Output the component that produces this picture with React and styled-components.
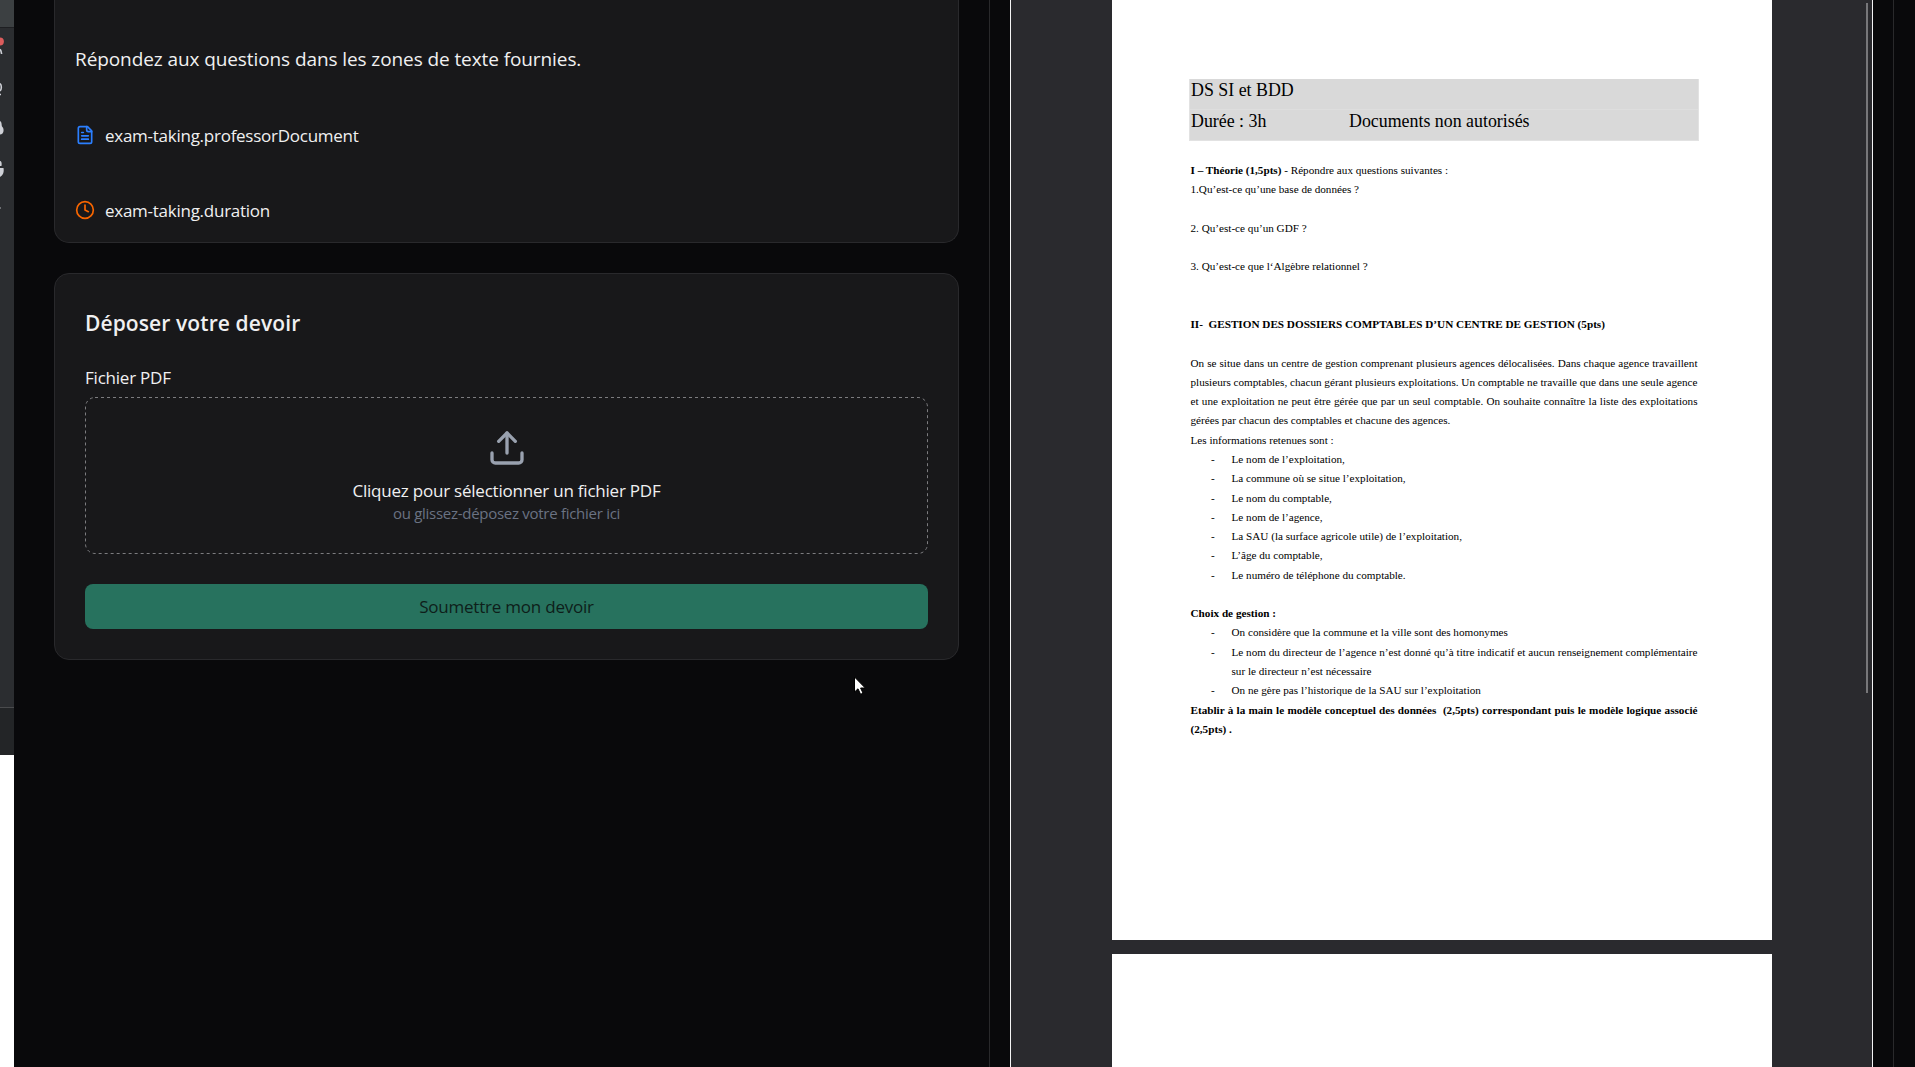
import React from "react";
import styled, { createGlobalStyle } from "styled-components";
import { Upload } from "lucide-react";

const GlobalStyle = createGlobalStyle`
  * { box-sizing: border-box; }
  body { margin: 0; background: #09090b; overflow: hidden; }
`;

const Screen = styled.div`
  position: relative;
  display: flex;
  width: 100vw;
  height: 100vh;
  overflow: hidden;
  background: #09090b;
  color: #f0f0f1;
  font-family: "Open Sans", "Noto Sans", sans-serif;
`;

/* Neighbouring editor window, visible along the left edge */
const EditorEdge = styled.aside`
  display: flex;
  flex-direction: column;
  flex: 0 0 14px;
  background: #fff;
`;
const EditorTitle = styled.div`
  height: 28px;
  background: #3c4042;
  border-bottom: 1px solid #1e1f22;
`;
const EditorTools = styled.div`
  height: 679px;
  background: #2b2d30;
`;
const EditorFooter = styled.div`
  height: 48px;
  background: #232527;
  border-top: 1px solid #4a4b4d;
`;

const Workspace = styled.main`
  display: flex;
  flex-direction: column;
  gap: 30px;
  flex: 0 0 976px;
  padding: 0 30px 0 40px;
  border-right: 1px solid #29292b;
`;

const Card = styled.section`
  border: 1px solid #29292c;
  border-radius: 15px;
  background: #18181a;
`;
const InstructionsCard = styled(Card)`
  display: flex;
  flex-direction: column;
  height: 243px;
  padding: 44px 20px 0;
  border-top: 0;
  border-top-left-radius: 0;
  border-top-right-radius: 0;
`;
const Instructions = styled.p`
  flex: none;
  margin: 0 0 46px;
  font-size: 19px;
  line-height: 30px;
  letter-spacing: -0.09px;
`;
const InfoRow = styled.div`
  display: flex;
  flex: none;
  align-items: center;
  gap: 10px;
  height: 30px;
  font-size: 17px;
  letter-spacing: -0.26px;

  & + & {
    margin-top: 45px;
  }
`;

const UploadCard = styled(Card)`
  display: flex;
  flex-direction: column;
  padding: 30px;
`;
const Heading = styled.h2`
  margin: 0 0 24px;
  font-size: 21px;
  font-weight: 600;
  line-height: 38px;
  letter-spacing: 0.1px;
`;
const Label = styled.label`
  margin-bottom: 7px;
  font-size: 17px;
  line-height: 24px;
  letter-spacing: -0.22px;
`;
const DropZone = styled.div`
  position: relative;
  display: flex;
  flex-direction: column;
  align-items: center;
  height: 157px;
  padding-top: 31px;
`;
const DashedOutline = styled.svg`
  position: absolute;
  inset: 0;
  width: 100%;
  height: 100%;
`;
const DropTitle = styled.div`
  margin-top: 11px;
  font-size: 17px;
  line-height: 24px;
  letter-spacing: -0.22px;
`;
const DropHint = styled.div`
  font-size: 15px;
  line-height: 20px;
  letter-spacing: -0.28px;
  color: #6a7282;
`;
const Submit = styled.button`
  height: 45px;
  margin-top: 30px;
  padding: 0;
  border: 0;
  border-radius: 8px;
  background: #27725e;
  color: #0e1e1a;
  font: 400 17px "Open Sans", "Noto Sans", sans-serif;
  letter-spacing: -0.22px;
`;

const ViewerPane = styled.section`
  flex: 1;
  display: flex;
  padding: 0 20px;
`;
const Viewer = styled.div`
  position: relative;
  flex: 1;
  display: flex;
  flex-direction: column;
  gap: 14px;
  padding-left: 101px;
  border: solid #f4f4f5;
  border-width: 0 1px;
  background: #2a2a2e;
`;
const ViewerColumn = styled.div`
  flex: 0 0 22px;
  border-left: 1px solid #29292b;
`;
const Thumb = styled.div`
  position: absolute;
  top: 3px;
  right: 4px;
  width: 2px;
  height: 690px;
  background: #77777a;
`;

const Page = styled.article`
  flex: 0 0 auto;
  width: 660px;
  height: ${(p) => p.$height}px;
  padding: 79px 73px 0 77px;
  background: #fff;
  color: #000;
  font-family: "Liberation Serif", "Times New Roman", serif;
`;
const TitleTable = styled.header`
  height: 62px;
  border: 1px solid #e2e2e2;
  border-top: 0;
  background: #d9d9d9;
  font-size: 17.87px;
  line-height: 23px;
`;
const TitleRow = styled.div`
  display: grid;
  grid-template-columns: 158px 1fr;
  height: 31px;
  padding-left: 1px;
  white-space: nowrap;

  & + & {
    border-top: 1px solid #dedede;
    height: 30px;
    margin-top: -1px;
  }
`;
const Body = styled.div`
  padding: 20px 1.5px 0;
  font-size: 11.17px;
  line-height: 19.28px;
`;
const TextLine = styled.div`
  height: 19.28px;
  white-space: nowrap;
  ${(p) => p.$bold && "font-weight: 700; font-size: 11.2px;"}
  ${(p) => p.$justify && "white-space: normal; text-align: justify; text-align-last: justify;"}
`;
const Item = styled.div`
  display: grid;
  grid-template-columns: 20.5px 1fr;
  padding-left: 20.5px;
`;

const Pointer = styled.svg`
  position: absolute;
  left: 853px;
  top: 676px;
`;

const FileIcon = () => (
  <svg width="20" height="20" viewBox="0 0 24 24" fill="none" stroke="#2b7fff" strokeWidth="2" strokeLinecap="round" strokeLinejoin="round">
    <path d="M15 2H6a2 2 0 0 0-2 2v16a2 2 0 0 0 2 2h12a2 2 0 0 0 2-2V7Z" />
    <path d="M14 2v4a2 2 0 0 0 2 2h4" />
    <path d="M10 9H8M16 13H8M16 17H8" />
  </svg>
);
const ClockIcon = () => (
  <svg width="20" height="20" viewBox="0 0 24 24" fill="none" stroke="#f86600" strokeWidth="2" strokeLinecap="round" strokeLinejoin="round">
    <circle cx="12" cy="12" r="10" />
    <path d="M12 6v6l4 2" />
  </svg>
);
const ToolGlyphs = () => (
  <svg width="14" height="200" viewBox="0 28 14 200" fill="none" stroke="#ced0d6" strokeWidth="1.6">
    <circle cx="0" cy="41.5" r="3.9" fill="#db5c5c" stroke="none" />
    <path d="M0 49.5Q1 50 1.6 54" />
    <path d="M0 83.5Q1.5 85 1.3 87.5Q1.2 90 0 91M0 94.5H1" />
    <path d="M0 121C2 122 1.5 125 2 126.500C4 128 4 132 2.500 133.500Q1.500 134.500 0 134.500Z" fill="#ced0d6" stroke="none" />
    <path d="M0 161C1.500 161 2 163 1.500 166L0 166ZM0 168H3.500C4.300 172 3 175.500 0 177Z" fill="#ced0d6" stroke="none" />
    <path d="M0 208H1" stroke="#84868a" />
  </svg>
);

const details = [
  "Le nom de l’exploitation,",
  "La commune où se situe l’exploitation,",
  "Le nom du comptable,",
  "Le nom de l’agence,",
  "La SAU (la surface agricole utile) de l’exploitation,",
  "L’âge du comptable,",
  "Le numéro de téléphone du comptable.",
];

const Bullet = ({ children, justify, mark = "-" }) => (
  <Item>
    <span>{mark}</span>
    <TextLine $justify={justify}>{children}</TextLine>
  </Item>
);

export default function App() {
  return (
    <Screen>
      <GlobalStyle />
      <EditorEdge>
        <EditorTitle />
        <EditorTools>
          <ToolGlyphs />
        </EditorTools>
        <EditorFooter />
      </EditorEdge>

      <Workspace>
        <InstructionsCard>
          <Instructions>Répondez aux questions dans les zones de texte fournies.</Instructions>
          <InfoRow>
            <FileIcon />
            exam-taking.professorDocument
          </InfoRow>
          <InfoRow>
            <ClockIcon />
            exam-taking.duration
          </InfoRow>
        </InstructionsCard>

        <UploadCard>
          <Heading>Déposer votre devoir</Heading>
          <Label>Fichier PDF</Label>
          <DropZone>
            <DashedOutline viewBox="0 0 843 157">
              <rect x="0.5" y="0.5" width="842" height="156" rx="9.500" fill="none" stroke="#7c7c7f" strokeDasharray="3 3" />
            </DashedOutline>
            <Upload size={40} color="#99a1af" />
            <DropTitle>Cliquez pour sélectionner un fichier PDF</DropTitle>
            <DropHint>ou glissez-déposez votre fichier ici</DropHint>
          </DropZone>
          <Submit>Soumettre mon devoir</Submit>
        </UploadCard>
      </Workspace>

      <ViewerPane>
        <Viewer>
          <Page $height={940}>
            <TitleTable>
              <TitleRow>DS SI et BDD</TitleRow>
              <TitleRow>
                <span>Durée : 3h</span>
                <span>Documents non autorisés</span>
              </TitleRow>
            </TitleTable>
            <Body>
              <TextLine>
                <b>I – Théorie (1,5pts)</b> - Répondre aux questions suivantes :
              </TextLine>
              <TextLine>1.Qu’est-ce qu’une base de données ?</TextLine>
              <TextLine />
              <TextLine>2. Qu’est-ce qu’un GDF ?</TextLine>
              <TextLine />
              <TextLine>3. Qu’est-ce que l‘Algèbre relationnel ?</TextLine>
              <TextLine />
              <TextLine />
              <TextLine $bold>II-&nbsp; GESTION DES DOSSIERS COMPTABLES D’UN CENTRE DE GESTION (5pts)</TextLine>
              <TextLine />
              <TextLine $justify>On se situe dans un centre de gestion comprenant plusieurs agences délocalisées. Dans chaque agence travaillent</TextLine>
              <TextLine $justify>plusieurs comptables, chacun gérant plusieurs exploitations. Un comptable ne travaille que dans une seule agence</TextLine>
              <TextLine $justify>et une exploitation ne peut être gérée que par un seul comptable. On souhaite connaître la liste des exploitations</TextLine>
              <TextLine>gérées par chacun des comptables et chacune des agences.</TextLine>
              <TextLine>Les informations retenues sont :</TextLine>
              {details.map((text) => (
                <Bullet key={text}>{text}</Bullet>
              ))}
              <TextLine />
              <TextLine $bold>Choix de gestion :</TextLine>
              <Bullet>On considère que la commune et la ville sont des homonymes</Bullet>
              <Bullet justify>Le nom du directeur de l’agence n’est donné qu’à titre indicatif et aucun renseignement complémentaire</Bullet>
              <Bullet mark="">sur le directeur n’est nécessaire</Bullet>
              <Bullet>On ne gère pas l’historique de la SAU sur l’exploitation</Bullet>
              <TextLine $bold $justify>Etablir à la main le modèle conceptuel des données&nbsp; (2,5pts) correspondant puis le modèle logique associé</TextLine>
              <TextLine $bold>(2,5pts) .</TextLine>
            </Body>
          </Page>
          <Page $height={300} />
          <Thumb />
        </Viewer>
      </ViewerPane>
      <ViewerColumn />

      <Pointer width="14" height="21" viewBox="0 0 14 21">
        <path d="M1.500 1V16L5 12.800L7.600 18.300L10 17.200L7.600 12H12.300Z" fill="#fff" stroke="#000" strokeWidth="1" />
      </Pointer>
    </Screen>
  );
}
